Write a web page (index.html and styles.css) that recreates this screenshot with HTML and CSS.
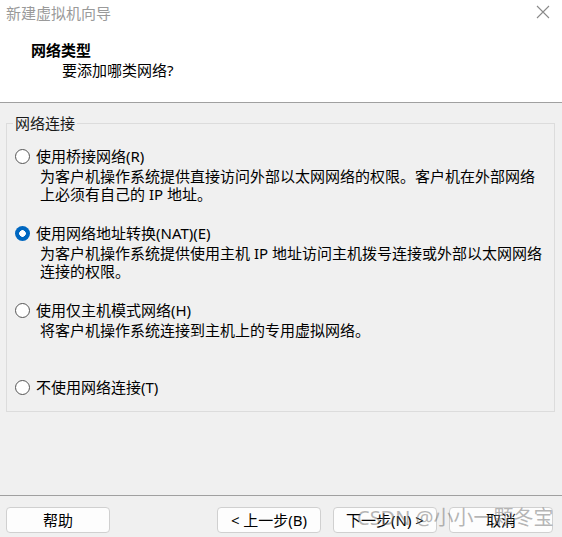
FILE: index.html
```html
<!DOCTYPE html>
<html lang="zh-CN">
<head>
<meta charset="utf-8">
<title>新建虚拟机向导</title>
<link rel="stylesheet" href="styles.css">
</head>
<body>
<div class="dialog">
  <header class="header">
    <div class="titlebar">
      <span class="title">新建虚拟机向导</span>
      <svg class="close" width="14" height="14" viewBox="0 0 14 14"><path d="M1 1 L13 13 M13 1 L1 13" stroke="#8a8a8a" stroke-width="1.1" fill="none"/></svg>
    </div>
    <div class="heading">网络类型</div>
    <div class="subheading">要添加哪类网络?</div>
  </header>
  <main class="content">
    <fieldset class="group">
      <legend class="legend">网络连接</legend>
      <div class="option">
        <div class="label"><span class="radio"></span>使用桥接网络(R)</div>
        <div class="desc">为客户机操作系统提供直接访问外部以太网网络的权限。客户机在外部网络<br>上必须有自己的 IP 地址。</div>
      </div>
      <div class="option">
        <div class="label"><span class="radio checked"></span>使用网络地址转换(NAT)(E)</div>
        <div class="desc">为客户机操作系统提供使用主机 IP 地址访问主机拨号连接或外部以太网网络<br>连接的权限。</div>
      </div>
      <div class="option">
        <div class="label"><span class="radio"></span>使用仅主机模式网络(H)</div>
        <div class="desc tall">将客户机操作系统连接到主机上的专用虚拟网络。</div>
      </div>
      <div class="option last">
        <div class="label"><span class="radio"></span>不使用网络连接(T)</div>
      </div>
    </fieldset>
  </main>
  <footer class="footer">
    <button class="btn">帮助</button>
    <div class="spacer"></div>
    <button class="btn">&lt; 上一步(B)</button>
    <button class="btn">下一步(N) &gt;</button>
    <button class="btn">取消</button>
    <div class="watermark">CSDN @小小一颗冬宝</div>
  </footer>
</div>
</body>
</html>
```
FILE: styles.css
```css
* { box-sizing: border-box; }
html, body {
  margin: 0;
  padding: 0;
  width: 562px;
  height: 537px;
  overflow: hidden;
}
body {
  font-family: "Noto Sans", "Noto Sans CJK SC", sans-serif;
  font-size: 15px;
  color: #000;
  background: #f0f0f0;
}
.dialog {
  display: flex;
  flex-direction: column;
  height: 537px;
}
.header {
  background: #fff;
  height: 103px;
  border-bottom: 1px solid #a0a0a0;
  padding-top: 3px;
}
.titlebar {
  display: flex;
  justify-content: space-between;
  align-items: center;
  height: 20px;
  padding: 0 12px 0 6px;
}
.title {
  color: #9a9a9a;
  line-height: 20px;
}
.close { display: block; margin-top: -2px; }
.heading {
  font-weight: bold;
  line-height: 20px;
  margin-top: 17px;
  padding-left: 31px;
}
.subheading {
  line-height: 20px;
  padding-left: 62px;
}
.content {
  flex: 1;
  padding: 10px 7px 0 6px;
}
.group {
  margin: 0;
  padding: 14px 0 15px 0;
  border: 1px solid #dcdcdc;
  min-width: 0;
}
.legend {
  margin-left: 6px;
  padding: 0 2px;
  line-height: 20px;
  color: #1a1a1a;
}
.option { margin-bottom: 21px; }
.option.last { margin-bottom: 0; }
.label {
  display: flex;
  align-items: center;
  line-height: 18px;
  padding-left: 8px;
}
.radio {
  width: 15px;
  height: 15px;
  border: 1px solid #555;
  border-radius: 50%;
  margin-right: 6px;
  background: #fff;
  flex: none;
}
.radio.checked {
  border: none;
  background: radial-gradient(circle, #fff 0 3px, #0067c0 3.6px);
}
.desc {
  margin-top: 2px;
  padding-left: 33px;
  line-height: 18px;
  color: #000;
}
.desc.tall { min-height: 36px; }
.footer {
  position: relative;
  height: 42px;
  border-top: 1px solid #a0a0a0;
  display: flex;
  align-items: flex-start;
  gap: 12px;
  padding: 11px 9px 0 6px;
}
.spacer { flex: 1; margin-left: -12px; }
.btn {
  width: 104px;
  height: 26px;
  background: #fdfdfd;
  border: 1px solid #d0d0d0;
  border-radius: 4px;
  font-family: "Noto Sans", "Noto Sans CJK SC", sans-serif;
  font-size: 15px;
  color: #000;
  padding: 0;
  line-height: 22px;
}
.watermark {
  position: absolute;
  left: 357px;
  top: 9px;
  font-size: 20px;
  line-height: 26px;
  color: rgba(110, 110, 110, 0.5);
  white-space: nowrap;
  pointer-events: none;
}
```
